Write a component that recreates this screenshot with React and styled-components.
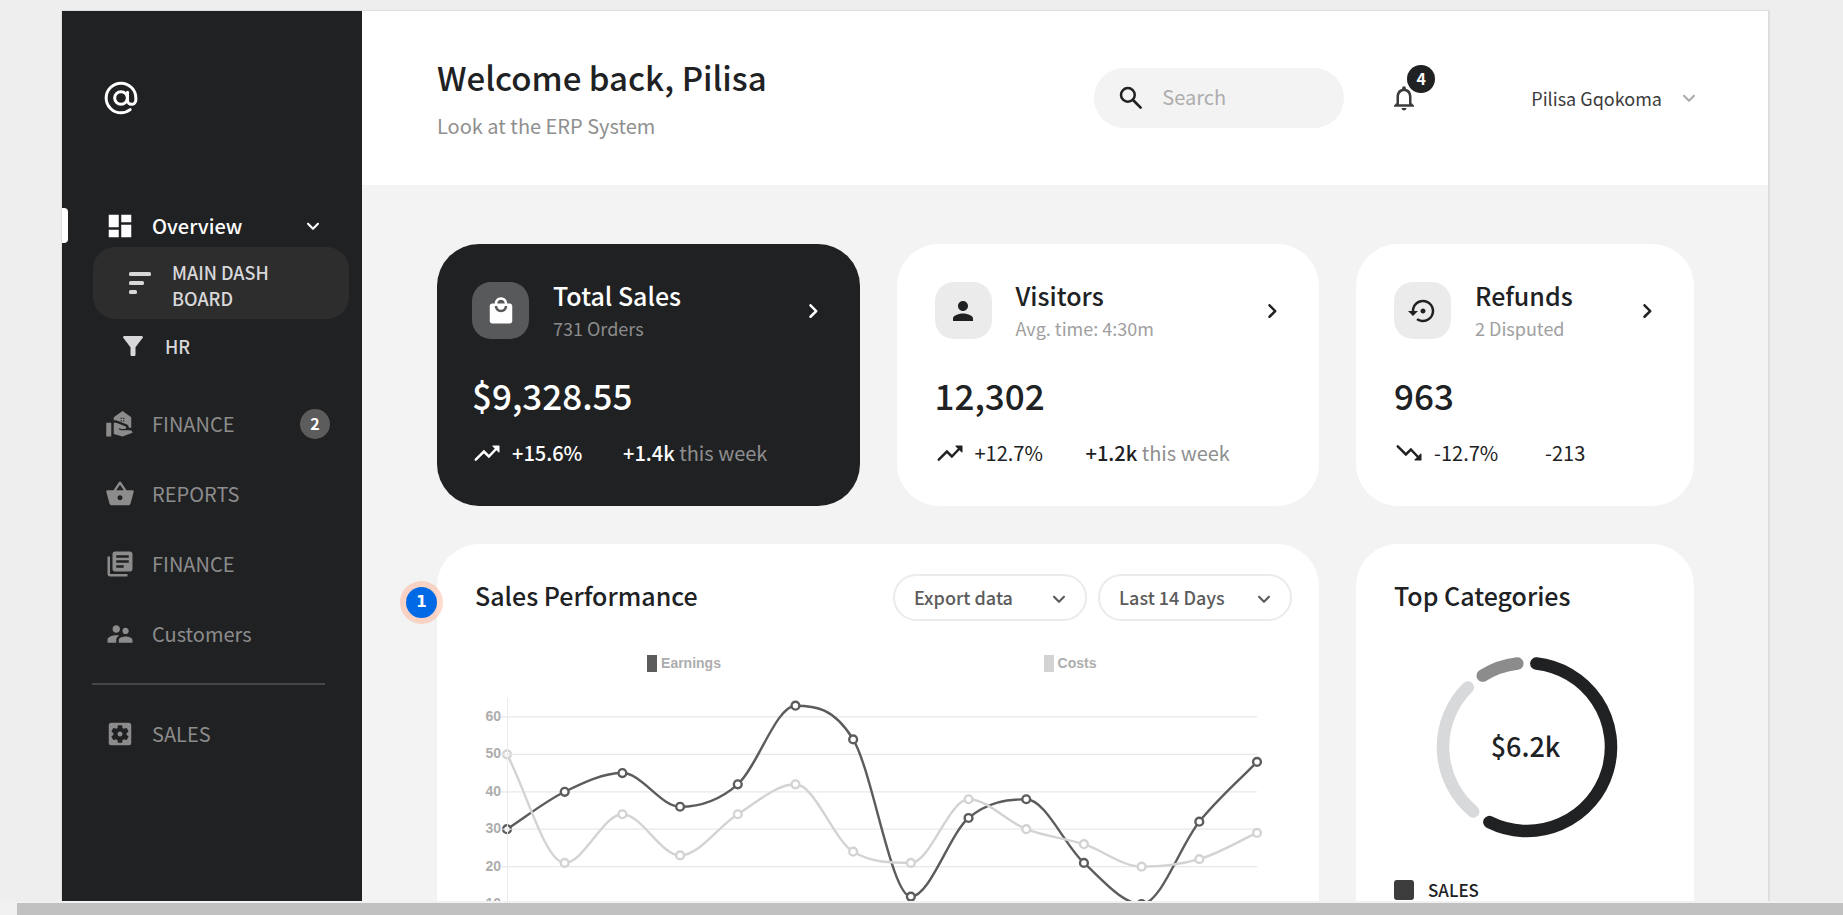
import React from "react";
import styled, { createGlobalStyle, css } from "styled-components";
import {
  MdDashboard, MdFilterAlt, MdRealEstateAgent, MdShoppingBasket,
  MdLibraryBooks, MdSupervisorAccount, MdSettingsApplications, MdLocalMall, MdPerson,
  MdSettingsBackupRestore, MdNotificationsNone,
} from "react-icons/md";

const ink = "#202123";

const GlobalStyle = createGlobalStyle`
  *, *::before, *::after { box-sizing: border-box; }
  body { margin: 0; background: #eeeeee; color: ${ink};
    font-family: "Noto Sans CJK SC", "Noto Sans", sans-serif; font-size: 20px; line-height: 30px; }
  h1, h2, p, ul { margin: 0; padding: 0; font-weight: 500; }
  ul { list-style: none; }
  a { color: inherit; text-decoration: none; }
  button, input, select { font: inherit; color: inherit; border: 0; background: none; padding: 0; margin: 0; }
  button { cursor: pointer; }
  svg { display: block; flex: none; }
`;

/* ---------- icons ---------- */

const Svg = ({ size = 30, children, ...rest }) => (
  <svg width={size} height={size} viewBox="0 0 24 24" fill="currentColor" aria-hidden="true" {...rest}>{children}</svg>
);
const AtIcon = () => (
  <Svg size={40}>
    <g fill="none" stroke="currentColor" strokeWidth="1.8" strokeLinecap="round">
      <circle cx="12" cy="12" r="3.8" />
      <path d="M15.9 8.5v4.9c0 1.4 1 2.4 2.4 2.4s2.6-1 2.6-2.6V12a8.9 8.9 0 1 0-8.9 8.9c2 0 4-.7 5.5-1.9" />
    </g>
  </Svg>
);
const ChevronDown = (p) => (
  <Svg size={26} {...p}><path d="M8.12 9.29 12 13.17l3.88-3.88c.39-.39 1.02-.39 1.41 0 .39.39.39 1.02 0 1.41l-4.59 4.59c-.39.39-1.02.39-1.41 0L6.7 10.7c-.39-.39-.39-1.02 0-1.41.39-.38 1.03-.39 1.42 0z" /></Svg>
);
const ChevronRight = (p) => (
  <Svg {...p}><path d="M9.29 15.88 13.17 12 9.29 8.12c-.39-.39-.39-1.02 0-1.41.39-.39 1.02-.39 1.41 0l4.59 4.59c.39.39.39 1.02 0 1.41L10.7 17.3c-.39.39-1.02.39-1.41 0-.38-.39-.39-1.03 0-1.42z" /></Svg>
);
const BarsIcon = () => (
  <Svg size={24}><rect x="1" y="1" width="22" height="4" rx="1.6" /><rect x="1" y="10" width="15" height="4" rx="1.6" /><rect x="1" y="19" width="8" height="4" rx="1.6" /></Svg>
);
const SearchIcon = () => (
  <Svg><g fill="none" stroke="currentColor" strokeWidth="2" strokeLinecap="round"><circle cx="9.5" cy="9.5" r="5.5" /><path d="M14 14l5.7 5.7" strokeWidth="2.2" /></g></Svg>
);
const TrendIcon = ({ down }) => (
  <Svg>
    <g transform={down ? "matrix(1 0 0 -1 0 24)" : undefined}>
      <path d="M3 17.3l6.5-6.5 4 4L20 8" fill="none" stroke="currentColor" strokeWidth="2" strokeLinecap="round" strokeLinejoin="miter" />
      <path d="M16.9 6h4.6c.3 0 .5.2.5.5v4.6c0 .4-.5.6-.8.3l-4.7-4.6c-.3-.3-.1-.8.4-.8z" />
    </g>
  </Svg>
);

/* ---------- page frame ---------- */

const Page = styled.div`height: 100vh; display: flex; flex-direction: column;`;
const Stage = styled.div`flex: 1; min-height: 0; overflow: hidden; padding: 10px 73px 0 61px;`;
const Frame = styled.div`
  display: flex; min-height: 100%;
  background: #f3f3f3; border: 1px solid #dedede; border-right-width: 2px; border-bottom: 0;
`;
const ScrollTrack = styled.div`flex: none; height: 14px; padding: 2px 0 0 17px; background: #f1f1f1;`;
const ScrollThumb = styled.div`height: 12px; background: #c1c1c1;`;

/* ---------- sidebar ---------- */

const Sidebar = styled.aside`flex: none; width: 300px; background: ${ink}; color: #8c8c8c; padding-top: 67px;`;
const Logo = styled.a`display: block; width: 40px; margin: 0 0 90px 39px; color: #fff;`;
const NavRow = styled.a`
  position: relative; display: flex; align-items: center; gap: 17px; height: 35px;
  padding: 0 32px 0 43px; margin-bottom: 35px;
  color: ${(p) => (p.$active ? "#fff" : "inherit")};
  ${(p) => p.$active && css`
    margin-bottom: 4px; font-weight: 500; padding-right: 36px;
    &::before { content: ""; position: absolute; left: 0; top: 0; width: 6px; height: 35px; background: #fff; border-radius: 0 4px 4px 0; }
  `}
`;
const NavLabel = styled.span`flex: 1;`;
const Count = styled.span`
  width: 30px; height: 30px; border-radius: 50%; background: #5c5c5c; color: #fff;
  font-size: 16px; font-weight: 700; line-height: 28px; text-align: center;
`;
const SubRow = styled.a`
  display: flex; align-items: center; font-size: 18px; font-weight: 500; line-height: 26px; color: #d8d8da;
  gap: 17px; padding-left: 56px; height: 54px; margin-bottom: 33px;
  ${(p) => p.$selected && css`
    gap: 20px; width: 256px; height: 72px; margin: 0 0 0 31px; padding: 0 60px 0 35px; background: #2d2d2d; border-radius: 22px;
    span { padding-top: 3px; }
  `}
`;
const Divider = styled.hr`width: 233px; height: 2px; margin: -3px 0 31px 30px; border: 0; background: #464647;`;

/* ---------- header ---------- */

const Main = styled.main`flex: 1; min-width: 0;`;
const Header = styled.header`
  display: flex; align-items: center; height: 174px; padding: 0 66px 0 75px; background: #fff;
`;
const Titles = styled.div`flex: 1; display: grid; gap: 9px; padding-bottom: 3px;`;
const PageTitle = styled.h1`font-size: 33px; line-height: 50px;`;
const Muted = styled.p`font-weight: 400; color: #8f8f8f;`;
const SearchBox = styled.label`
  display: flex; align-items: center; gap: 16px; width: 250px; height: 60px; padding: 0 22px; border-radius: 30px; background: #f3f3f3;
`;
const SearchInput = styled.input`
  flex: 1; min-width: 0; outline: 0; padding-bottom: 3px;
  &::placeholder { color: #adadad; opacity: 1; }
`;
const BellButton = styled.button`position: relative; margin-left: 45px; color: #3c3c3c;`;
const BellCount = styled.span`
  position: absolute; left: 18px; top: -18px; width: 28px; height: 28px; border-radius: 50%;
  background: ${ink}; color: #fff; font-size: 16px; font-weight: 700; line-height: 26px;
`;
const UserButton = styled.button`
  display: flex; align-items: center; gap: 14px; margin-left: 112px; font-size: 18px; color: #3c3c3c;
  svg { color: #adadad; }
`;

/* ---------- cards ---------- */

const Grid = styled.div`
  display: grid; grid-template-columns: 5fr 5fr 4fr; gap: 38px 37px; padding: 59px 74px 60px 75px;
`;
const Card = styled.section`
  position: relative; border-radius: 42px; background: ${(p) => (p.$dark ? ink : "#fff")}; color: ${(p) => (p.$dark ? "#fff" : ink)};
`;
const StatBody = styled(Card)`padding: 38px 32px 38px ${(p) => (p.$dark ? 35 : 38)}px;`;
const StatTop = styled.div`display: flex; align-items: center; gap: 24px; height: 57px;`;
const IconTile = styled.div`
  flex: none; display: grid; place-items: center; width: 57px; height: 57px; border-radius: 19px;
  background: ${(p) => (p.$dark ? "#58595b" : "#ebebeb")};
`;
const StatTitles = styled.div`flex: 1; min-width: 0; white-space: nowrap; padding-bottom: 2px;`;
const CardTitle = styled.h2`font-size: 25px; line-height: 36px; font-weight: ${(p) => (p.$bold ? 700 : 500)};`;
const StatSub = styled.p`font-size: 18px; font-weight: 400; color: ${(p) => (p.$dark ? "#8c8c8c" : "#a0a0a0")};`;
const StatValue = styled.p`margin-top: 34px; font-size: 35px; line-height: 44px;`;
const StatFoot = styled.div`display: grid; grid-template-columns: 30px 101px auto; column-gap: 10px; justify-content: start; align-items: center; height: 30px; margin-top: 21px; white-space: nowrap;`;
const Strong = styled.span`font-weight: ${(p) => (p.$bold ? 500 : 400)};`;
const Soft = styled.span`color: #8f8f8f;`;

const StatCard = ({ dark, icon: Icon, title, sub, value, pct, delta, down, note }) => (
  <StatBody $dark={dark}>
    <StatTop>
      <IconTile $dark={dark}><Icon size={30} /></IconTile>
      <StatTitles>
        <CardTitle>{title}</CardTitle>
        <StatSub $dark={dark}>{sub}</StatSub>
      </StatTitles>
      <button type="button" aria-label={`Open ${title}`}><ChevronRight /></button>
    </StatTop>
    <StatValue>{value}</StatValue>
    <StatFoot>
      <TrendIcon down={down} />
      <Strong $bold={dark}>{pct}</Strong>
      <span><Strong $bold={!down}>{delta}</Strong>{note && <Soft> {note}</Soft>}</span>
    </StatFoot>
  </StatBody>
);

/* ---------- sales chart ---------- */

const ChartCard = styled(Card)`grid-column: span 2;`;
const ChartHead = styled.div`display: flex; align-items: center; gap: 11px; padding: 30px 27px 0 38px;`;
const HeadTitle = styled(CardTitle)`flex: 1; padding-bottom: 5px;`;
const SelectWrap = styled.label`
  position: relative; color: #5c5c5c;
  svg { position: absolute; right: 15px; top: 12px; pointer-events: none; }
`;
const Select = styled.select`
  appearance: none; width: 194px; height: 47px; padding: 0 44px 2px 19px; border: 2px solid #ebebeb; border-radius: 24px;
  font-size: 18px; font-weight: 500; outline: 0;
`;
const Legend = styled.ul`
  display: grid; grid-template-columns: 1fr 1fr; justify-items: center; padding: 34px 56px 0 54px;
  font: bold 14px/17px "Liberation Sans", Arial, sans-serif; color: #adadad;
`;
const LegendItem = styled.li`
  display: flex; gap: 4px;
  &::before { content: ""; width: 10px; height: 17px; background: ${(p) => p.$color}; }
`;
const ChartSvg = styled.svg`
  width: 100%; height: auto; margin-top: 20px;
  text { font: bold 14px "Liberation Sans", Arial, sans-serif; fill: #adadad; }
`;
const Pin = styled.button`
  position: absolute; left: -37px; top: 37px; width: 43px; height: 43px; border-radius: 50%; padding: 6px;
  background: rgba(255, 140, 100, 0.32);
`;
const PinDot = styled.span`
  display: block; width: 31px; height: 31px; border-radius: 50%; background: #006ae6; color: #fff;
  font: 700 15px/31px "DejaVu Sans", sans-serif; text-align: center;
`;

const earnings = [30, 40, 45, 36, 42, 63, 54, 12, 33, 38, 21, 10, 32, 48];
const costs = [50, 21, 34, 23, 34, 42, 24, 21, 38, 30, 26, 20, 22, 29];
const left = 70, right = 820, unit = 3.743, base = 249.5;
const step = (right - left) / (earnings.length - 1);
const toPoints = (values) => values.map((v, i) => ({ x: left + i * step, y: base - v * unit }));

/* Monotone cubic path through the points. */
function smoothPath(pts) {
  const d = pts.slice(1).map((p, i) => (p.y - pts[i].y) / (p.x - pts[i].x));
  const m = pts.map((_, i) => {
    if (i === 0) return d[0];
    if (i === pts.length - 1) return d[i - 1];
    return d[i - 1] * d[i] <= 0 ? 0 : (d[i - 1] + d[i]) / 2;
  });
  d.forEach((s, i) => {
    if (s === 0) { m[i] = m[i + 1] = 0; return; }
    const a = m[i] / s, b = m[i + 1] / s, q = a * a + b * b;
    if (q > 9) { const t = 3 / Math.sqrt(q); m[i] = a * t * s; m[i + 1] = b * t * s; }
  });
  return pts.slice(1).reduce((path, p, i) => {
    const h = (p.x - pts[i].x) / 3;
    return `${path}C${pts[i].x + h} ${pts[i].y + m[i] * h} ${p.x - h} ${p.y - m[i + 1] * h} ${p.x} ${p.y}`;
  }, `M${pts[0].x} ${pts[0].y}`);
}

const Series = ({ values, color }) => {
  const pts = toPoints(values);
  return (
    <g stroke={color} strokeWidth="2.4">
      <path d={smoothPath(pts)} fill="none" />
      {pts.map((p) => <circle key={p.x} cx={p.x} cy={p.y} r="3.9" fill="#fff" />)}
    </g>
  );
};

const SalesChart = () => (
  <ChartSvg viewBox="0 0 882 270" role="img" aria-label="Earnings and costs over the last 14 days">
    {[0, 10, 20, 30, 40, 50, 60].map((v) => {
      const y = base - v * unit;
      return (
        <g key={v}>
          <path d={`M${left - 6} ${y}H${right}`} stroke="#e8e8e8" strokeWidth="1.3" />
          <text x={left - 6} y={y + 4} textAnchor="end">{v}</text>
        </g>
      );
    })}
    <Series values={earnings} color="#5c5c5c" />
    <Series values={costs} color="#d3d3d3" />
    <path d={`M${left + 0.5} 6V${base}`} stroke="#ebebeb" />
    <path d={`M${left - 6} ${base - 30 * unit}h12M${left - 6} ${base - 50 * unit}h12`} stroke="#ebebeb" />
  </ChartSvg>
);

/* ---------- categories ---------- */

const CategoryCard = styled(Card)`padding: 33px 34px 36px 38px;`;
const Donut = styled.div`position: relative; width: 184px; margin: 42px auto 0;`;
const DonutValue = styled.span`
  position: absolute; inset: 0; display: grid; place-items: center; font-size: 27px; font-weight: 500; line-height: 30px; padding: 0 3px 3px 0;
`;
const Key = styled.div`
  display: flex; align-items: center; gap: 14px; margin-top: 38px; font-size: 17px; font-weight: 500; line-height: 26px;
  &::before { content: ""; width: 20px; height: 20px; border-radius: 3px; background: #3c3c3c; }
`;

const arc = (from, to) => {
  const at = (deg) => {
    const r = (deg * Math.PI) / 180;
    return `${92 + 84 * Math.sin(r)} ${92 - 84 * Math.cos(r)}`;
  };
  return `M${at(from)}A84 84 0 ${to - from > 180 ? 1 : 0} 1 ${at(to)}`;
};

const navItems = [
  { label: "FINANCE", icon: MdRealEstateAgent, count: 2 },
  { label: "REPORTS", icon: MdShoppingBasket },
  { label: "FINANCE", icon: MdLibraryBooks },
  { label: "Customers", icon: MdSupervisorAccount },
];

export default function App() {
  return (
    <Page>
      <GlobalStyle />
      <Stage>
        <Frame>
          <Sidebar>
            <Logo href="#" aria-label="Home"><AtIcon /></Logo>
            <nav>
              <NavRow href="#" $active><MdDashboard size={30} /><NavLabel>Overview</NavLabel><ChevronDown /></NavRow>
              <SubRow href="#" $selected><BarsIcon /><span>MAIN DASH BOARD</span></SubRow>
              <SubRow href="#"><MdFilterAlt size={30} /><span>HR</span></SubRow>
              {navItems.map(({ label, icon: Icon, count }, i) => (
                <NavRow href="#" key={i}><Icon size={30} /><NavLabel>{label}</NavLabel>{count && <Count>{count}</Count>}</NavRow>
              ))}
              <Divider />
              <NavRow href="#"><MdSettingsApplications size={30} /><NavLabel>SALES</NavLabel></NavRow>
            </nav>
          </Sidebar>
          <Main>
            <Header>
              <Titles>
                <PageTitle>Welcome back, Pilisa</PageTitle>
                <Muted>Look at the ERP System</Muted>
              </Titles>
              <SearchBox><SearchIcon /><SearchInput type="text" placeholder="Search" aria-label="Search" /></SearchBox>
              <BellButton type="button" aria-label="Notifications"><MdNotificationsNone size={30} /><BellCount>4</BellCount></BellButton>
              <UserButton type="button">Pilisa Gqokoma<ChevronDown /></UserButton>
            </Header>
            <Grid>
              <StatCard dark icon={MdLocalMall} title="Total Sales" sub="731 Orders" value="$9,328.55" pct="+15.6%" delta="+1.4k" note="this week" />
              <StatCard icon={MdPerson} title="Visitors" sub="Avg. time: 4:30m" value="12,302" pct="+12.7%" delta="+1.2k" note="this week" />
              <StatCard icon={MdSettingsBackupRestore} title="Refunds" sub="2 Disputed" value="963" pct="-12.7%" delta="-213" down />
              <ChartCard>
                <Pin type="button" aria-label="Note 1"><PinDot>1</PinDot></Pin>
                <ChartHead>
                  <HeadTitle>Sales Performance</HeadTitle>
                  <SelectWrap><Select aria-label="Export" defaultValue="Export data"><option>Export data</option></Select><ChevronDown /></SelectWrap>
                  <SelectWrap><Select aria-label="Period" defaultValue="Last 14 Days"><option>Last 14 Days</option></Select><ChevronDown /></SelectWrap>
                </ChartHead>
                <Legend>
                  <LegendItem $color="#5c5c5c">Earnings</LegendItem>
                  <LegendItem $color="#d3d3d3">Costs</LegendItem>
                </Legend>
                <SalesChart />
              </ChartCard>
              <CategoryCard>
                <CardTitle>Top Categories</CardTitle>
                <Donut>
                  <svg width="184" height="184" viewBox="0 0 184 184" fill="none" strokeWidth="12.5" strokeLinecap="round" aria-hidden="true">
                    <path d={arc(6.4, 206.6)} stroke={ink} />
                    <path d={arc(219.8, 315.2)} stroke="#d8d9db" />
                    <path d={arc(328.2, 353.4)} stroke="#8c8c8c" />
                  </svg>
                  <DonutValue>$6.2k</DonutValue>
                </Donut>
                <Key>SALES</Key>
              </CategoryCard>
            </Grid>
          </Main>
        </Frame>
      </Stage>
      <ScrollTrack><ScrollThumb /></ScrollTrack>
    </Page>
  );
}
